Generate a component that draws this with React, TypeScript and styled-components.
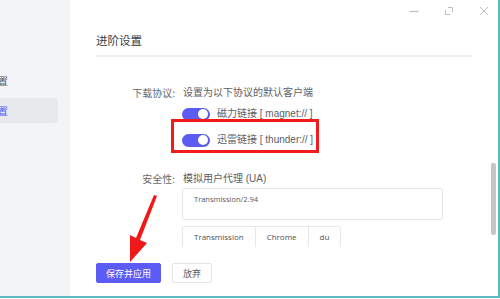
import styled, { createGlobalStyle } from 'styled-components';
import { FC } from 'react';

const Global = createGlobalStyle`
  html, body {
    margin: 0;
    padding: 0;
    background: #ffffff;
  }
  * {
    box-sizing: border-box;
  }
`;

const Window = styled.div`
  width: 500px;
  height: 299px;
  display: flex;
  overflow: hidden;
  font-family: "Noto Sans CJK SC", "Noto Sans", sans-serif;
  background: #ffffff;
`;

const Frame = styled.div`
  flex: 1;
  height: 298px;
  display: flex;
  border-right: 2px solid #5cb9c2;
  border-bottom: 2px solid #5cb9c2;
`;

const Sidebar = styled.aside`
  width: 70px;
  flex-shrink: 0;
  background: #f3f4f6;
  padding-top: 68px;
  display: flex;
  flex-direction: column;
  gap: 5px;
`;

const SideItem = styled.div<{ $active?: boolean }>`
  width: 58px;
  height: 25px;
  border-radius: 0 4px 4px 0;
  background: ${(p) => (p.$active ? '#e8e9ed' : 'transparent')};
  color: ${(p) => (p.$active ? '#5b5cf0' : '#5a5e64')};
  font-size: 10.5px;
  display: flex;
  align-items: center;
  justify-content: flex-end;
  padding-right: 50px;
  overflow: hidden;
  white-space: nowrap;
`;

const Main = styled.main`
  flex: 1;
  position: relative;
  display: flex;
  flex-direction: column;
  padding-left: 26px;
`;

const TitleBar = styled.div`
  height: 20px;
  display: flex;
  justify-content: flex-end;
  align-items: center;
  gap: 25px;
  padding-right: 9px;
  padding-top: 1px;
`;

const Title = styled.h2`
  margin: 10px 0 0;
  font-size: 11.5px;
  font-weight: 400;
  color: #3a3e45;
  height: 25px;
  line-height: 20px;
`;

const Divider = styled.div`
  width: 377px;
  height: 2px;
  background: #eeeff1;
`;

const Scroll = styled.div`
  height: 190px;
  overflow: hidden;
  padding-top: 28px;
`;

const Row = styled.div<{ $gapTop?: number }>`
  display: flex;
  gap: 8px;
  margin-top: ${(p) => p.$gapTop ?? 0}px;
`;

const Label = styled.div`
  width: 79px;
  text-align: right;
  font-size: 10px;
  line-height: 16px;
  color: #64686e;
  flex-shrink: 0;
`;

const Value = styled.div`
  display: flex;
  flex-direction: column;
  font-family: "Liberation Sans", "Noto Sans CJK SC", sans-serif;
  font-size: 10px;
  line-height: 16px;
  color: #5c6066;
`;

const Option = styled.div`
  display: flex;
  align-items: center;
  gap: 7px;
  height: 26px;
  margin-left: -1px;
`;

const Switch = styled.span`
  width: 28px;
  height: 13px;
  border-radius: 7px;
  background: #5c5cf2;
  position: relative;
  flex-shrink: 0;

  &::after {
    content: '';
    position: absolute;
    right: 2px;
    top: 1.5px;
    width: 10px;
    height: 10px;
    border-radius: 50%;
    background: #ffffff;
  }
`;

const UaBox = styled.div`
  width: 261px;
  height: 32px;
  margin-top: 1px;
  margin-left: -1px;
  border: 1px solid #e6e7ea;
  border-radius: 3px;
  padding: 4px 11px;
  font-family: "Open Sans", "Noto Sans", sans-serif;
  font-size: 7.5px;
  line-height: 12px;
  color: #55595f;
`;

const Presets = styled.div`
  display: flex;
  margin-top: 6px;
  margin-left: -1px;
`;

const Preset = styled.div`
  height: 22px;
  padding: 4px 11px 0;
  border: 1px solid #e6e7ea;
  border-left-width: 0;
  font-family: "Open Sans", "Noto Sans", sans-serif;
  font-size: 8px;
  line-height: 12px;
  color: #4b4f55;
  &:first-child {
    border-left-width: 1px;
    border-radius: 3px 0 0 0;
  }
  &:last-child {
    border-radius: 0 3px 0 0;
  }
`;

const Footer = styled.div`
  display: flex;
  gap: 11px;
  padding-top: 16px;
`;

const Button = styled.button<{ $primary?: boolean }>`
  height: 20px;
  padding: 0 ${(p) => (p.$primary ? '9px' : '10px')};
  border-radius: 2px;
  font-family: "Noto Sans CJK SC", sans-serif;
  font-size: 9px;
  border: 1px solid ${(p) => (p.$primary ? '#5c5cf5' : '#e3e4e7')};
  background: ${(p) => (p.$primary ? '#5c5cf5' : '#ffffff')};
  color: ${(p) => (p.$primary ? '#ffffff' : '#555a60')};
`;

const ScrollThumb = styled.div`
  position: absolute;
  right: 2px;
  top: 163px;
  width: 5px;
  height: 72px;
  border-radius: 2px;
  background: #c4c6c9;
`;

const Highlight = styled.div`
  position: absolute;
  left: 101px;
  top: 119px;
  width: 148px;
  height: 34px;
  border: 3px solid #f21b1b;
`;

const Arrow = styled.svg`
  position: absolute;
  left: 50px;
  top: 190px;
`;

const Stroke = '#bcbec2';

const App: FC = () => {
  return (
    <Window>
      <Global />
      <Frame>
        <Sidebar>
          <SideItem>常规设置</SideItem>
          <SideItem $active>进阶设置</SideItem>
        </Sidebar>
        <Main>
          <TitleBar>
            <svg width="10" height="10" viewBox="0 0 10 10">
              <path d="M0.5 5.5h9" stroke={Stroke} strokeWidth="1.2" />
            </svg>
            <svg width="10" height="10" viewBox="0 0 10 10">
              <path d="M4 1.5h4.5v4.5M6 8.5H1.5V4" stroke={Stroke} strokeWidth="1" fill="none" />
            </svg>
            <svg width="10" height="10" viewBox="0 0 10 10">
              <path d="M1 1l8 8M9 1l-8 8" stroke={Stroke} strokeWidth="1" />
            </svg>
          </TitleBar>
          <Title>进阶设置</Title>
          <Divider />
          <Scroll>
            <Row>
              <Label>下载协议:</Label>
              <Value>
                <span>设置为以下协议的默认客户端</span>
                <Option>
                  <Switch />
                  <span>磁力链接 [ magnet:// ]</span>
                </Option>
                <Option>
                  <Switch />
                  <span>迅雷链接 [ thunder:// ]</span>
                </Option>
              </Value>
            </Row>
            <Row $gapTop={18}>
              <Label>安全性:</Label>
              <Value>
                <span>模拟用户代理 (UA)</span>
                <UaBox>Transmission/2.94</UaBox>
                <Presets>
                  <Preset>Transmission</Preset>
                  <Preset>Chrome</Preset>
                  <Preset>du</Preset>
                </Presets>
              </Value>
            </Row>
          </Scroll>
          <Footer>
            <Button $primary>保存并应用</Button>
            <Button>放弃</Button>
          </Footer>
          <ScrollThumb />
          <Highlight />
          <Arrow width="40" height="80" viewBox="0 0 40 80">
            <path d="M37 6 L20 50 L27 53 L10 72 L10 45 L16 48 L34 5 Z" fill="#f01818" />
          </Arrow>
        </Main>
      </Frame>
    </Window>
  );
};

export default App;
